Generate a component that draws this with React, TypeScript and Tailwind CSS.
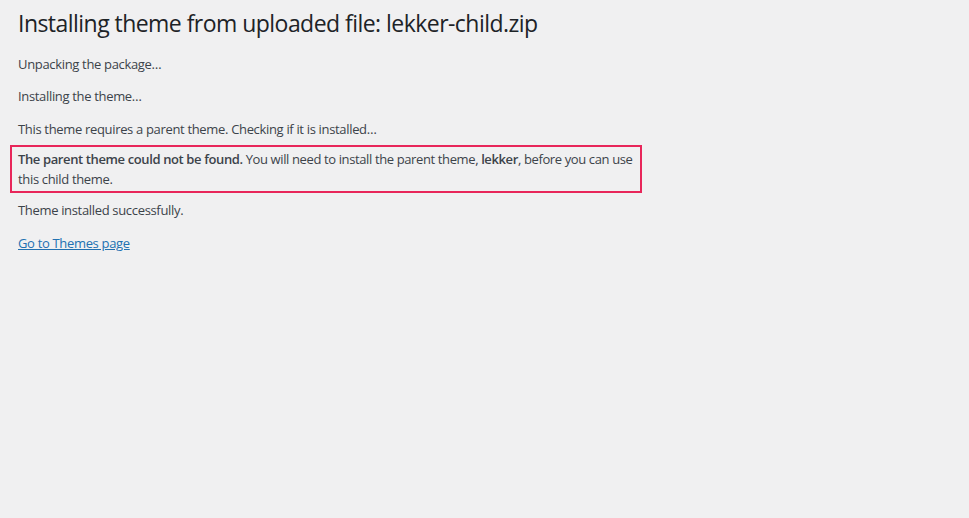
import React from 'react';

function App() {
  return (
    <main
      className="h-[518px] w-full bg-[#f0f0f1] px-[18px] text-[13px] leading-[19.5px] tracking-[-0.33px] text-[#3c434a]"
      style={{ fontFamily: '"Open Sans", "Noto Sans", sans-serif' }}
    >
      <h1 className="pb-[4px] pt-[9px] text-[23px] font-normal leading-[29.9px] tracking-[-0.54px] text-[#1d2327]">
        Installing theme from uploaded file: lekker-child.zip
      </h1>

      <p className="mt-[12px]">Unpacking the package&hellip;</p>
      <p className="mt-[13px]">Installing the theme&hellip;</p>
      <p className="mt-[13px]">This theme requires a parent theme. Checking if it is installed&hellip;</p>

      <div className="-mx-[8px] mt-[6px] w-[632px] border-2 border-[#e8265a] px-[6px] pb-[2px] pt-[3px]">
        <p>
          <span className="whitespace-nowrap tracking-[-0.38px]">
            <strong className="font-semibold">The parent theme could not be found.</strong>
            {' '}You will need to install the parent theme, <strong className="font-semibold">lekker</strong>, before you can use
          </span>
          <br />
          this child theme.
        </p>
      </div>

      <p className="mt-[8px]">Theme installed successfully.</p>
      <p className="mt-[13px]">
        <a href="#" className="text-[#2271b1] underline">Go to Themes page</a>
      </p>
    </main>
  );
}

export default App;
